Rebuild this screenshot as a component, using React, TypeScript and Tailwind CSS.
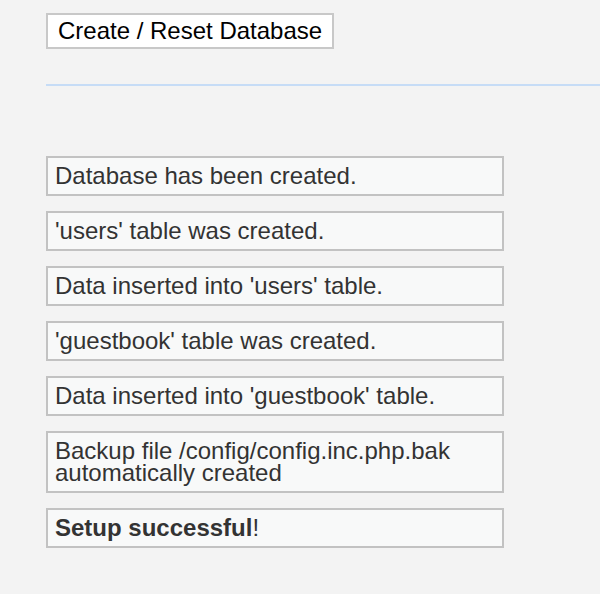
import React from "react";

const messages: React.ReactNode[] = [
    "Database has been created.",
    "'users' table was created.",
    "Data inserted into 'users' table.",
    "'guestbook' table was created.",
    "Data inserted into 'guestbook' table.",
    <>
        Backup file /config/config.inc.php.bak
        <br />
        automatically created
    </>,
    <>
        <b>Setup successful</b>!
    </>,
];

export default function App() {
    return (
        <div className="min-h-[594px] w-[600px] bg-[#f3f3f3] pl-[46px] pt-[13px] font-['Liberation_Sans',Arial,sans-serif]">
            <button
                type="button"
                className="border-2 border-[#c8c8c8] bg-white px-[10px] py-[5px] text-[24px] leading-[22px] text-black"
            >
                Create / Reset Database
            </button>
            <hr className="mt-[35px] h-[2px] border-0 bg-[#c6dcf6]" />
            <div className="mt-[70px] flex w-[458px] flex-col gap-[15px]">
                {messages.map((m, i) => (
                    <div
                        key={i}
                        className="border-2 border-[#c2c2c2] bg-[#f8f9f9] px-[7px] py-[7px] text-[24px] leading-[22px] text-[#333]"
                    >
                        {m}
                    </div>
                ))}
            </div>
        </div>
    );
}
